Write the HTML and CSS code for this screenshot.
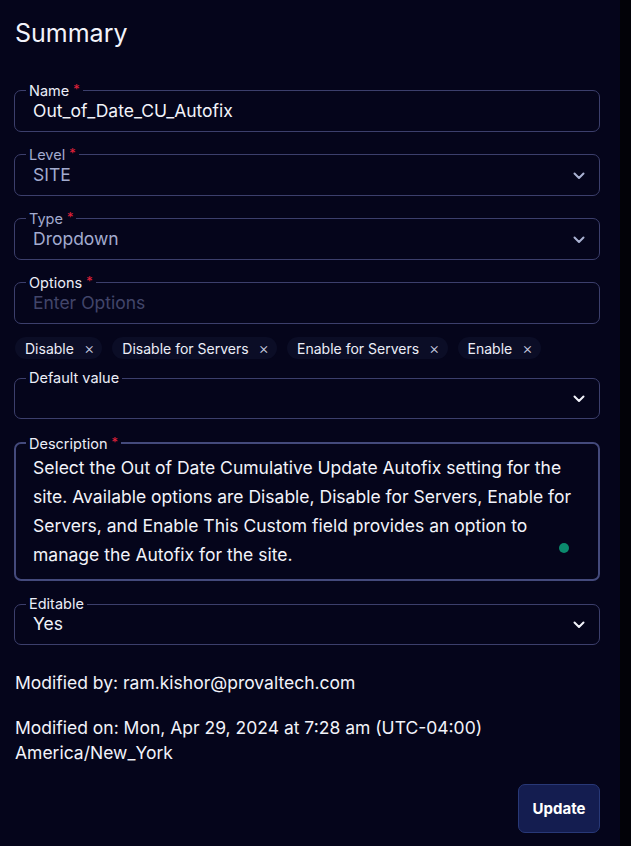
FILE: index.html
```html
<!DOCTYPE html>
<html lang="en">
<head>
<meta charset="utf-8">
<title>Summary</title>
<link rel="stylesheet" href="styles.css">
</head>
<body>
<div class="panel">
  <h1 class="title">Summary</h1>

  <fieldset class="field">
    <legend class="label">Name<span class="req">*</span></legend>
    <div class="row"><span class="value">Out_of_Date_CU_Autofix</span></div>
  </fieldset>

  <fieldset class="field muted">
    <legend class="label">Level<span class="req">*</span></legend>
    <div class="row"><span class="value">SITE</span>
      <svg class="chev" width="12" height="8" viewBox="0 0 12 8"><path d="M1.5 1.5 L6 6 L10.5 1.5" fill="none" stroke="currentColor" stroke-width="2" stroke-linecap="round" stroke-linejoin="round"/></svg>
    </div>
  </fieldset>

  <fieldset class="field muted">
    <legend class="label">Type<span class="req">*</span></legend>
    <div class="row"><span class="value">Dropdown</span>
      <svg class="chev" width="12" height="8" viewBox="0 0 12 8"><path d="M1.5 1.5 L6 6 L10.5 1.5" fill="none" stroke="currentColor" stroke-width="2" stroke-linecap="round" stroke-linejoin="round"/></svg>
    </div>
  </fieldset>

  <fieldset class="field">
    <legend class="label">Options<span class="req">*</span></legend>
    <div class="row"><span class="value placeholder">Enter Options</span></div>
  </fieldset>

  <div class="chips">
    <span class="chip">Disable<span class="x">×</span></span>
    <span class="chip">Disable for Servers<span class="x">×</span></span>
    <span class="chip">Enable for Servers<span class="x">×</span></span>
    <span class="chip">Enable<span class="x">×</span></span>
  </div>

  <fieldset class="field default">
    <legend class="label">Default value</legend>
    <div class="row"><span class="value"></span>
      <svg class="chev" width="12" height="8" viewBox="0 0 12 8"><path d="M1.5 1.5 L6 6 L10.5 1.5" fill="none" stroke="currentColor" stroke-width="2" stroke-linecap="round" stroke-linejoin="round"/></svg>
    </div>
  </fieldset>

  <fieldset class="field desc">
    <legend class="label">Description<span class="req">*</span></legend>
    <div class="desc-text">Select the Out of Date Cumulative Update Autofix setting for the site. Available options are Disable, Disable for Servers, Enable for Servers, and Enable This Custom field provides an option to manage the Autofix for the site.</div>
    <span class="dot"></span>
  </fieldset>

  <fieldset class="field editable">
    <legend class="label">Editable</legend>
    <div class="row"><span class="value">Yes</span>
      <svg class="chev" width="12" height="8" viewBox="0 0 12 8"><path d="M1.5 1.5 L6 6 L10.5 1.5" fill="none" stroke="currentColor" stroke-width="2" stroke-linecap="round" stroke-linejoin="round"/></svg>
    </div>
  </fieldset>

  <p class="meta">Modified by: ram.kishor@provaltech.com</p>
  <p class="meta meta-on">Modified on: Mon, Apr 29, 2024 at 7:28 am (UTC-04:00) America/New_York</p>

  <div class="actions">
    <button class="btn">Update</button>
  </div>
</div>
</body>
</html>
```

FILE: styles.css
```css
* { box-sizing: border-box; }
html, body {
  margin: 0;
  padding: 0;
  background: #020208;
  height: 100%;
}
body {
  font-family: Inter, "Noto Sans", "Liberation Sans", sans-serif;
  color: #eceef8;
}
.panel {
  width: 620px;
  min-height: 846px;
  background: #05051b;
  padding: 17px 20px 0 14px;
  display: flex;
  flex-direction: column;
}
.title {
  margin: 0 0 32px 1px;
  font-size: 25px;
  line-height: 32px;
  font-weight: 400;
  color: #f2f3fa;
}
.field {
  margin: 0 0 13px 0;
  padding: 0 14px 8px 11px;
  border: 1px solid #3c3f6c;
  border-radius: 7px;
  min-width: 0;
  position: relative;
}
.label {
  padding: 0 3px;
  font-size: 14.5px;
  line-height: 16px;
  color: #eceef8;
}
.req {
  color: #e3213a;
  margin-left: 4px;
  font-size: 13px;
  vertical-align: 2px;
}
.row {
  display: flex;
  align-items: center;
  justify-content: space-between;
  height: 24px;
  padding: 0 0 0 7px;
}
.value {
  font-size: 17.5px;
  line-height: 24px;
  color: #f2f3fa;
}
.muted .label, .muted .value { color: #a3abcf; }
.muted .chev { color: #aab2d2; }
.chev { color: #f2f3fa; margin-top: 2px; }
.placeholder { color: #42456a; }
.chips {
  display: flex;
  gap: 10px;
  margin: 0 0 11px 1px;
}
.chip {
  display: inline-flex;
  align-items: center;
  height: 22px;
  padding: 0 8px 0 10px;
  border-radius: 11px;
  background: #0b0d26;
  font-size: 14px;
  color: #eceef8;
}
.x {
  margin-left: 10px;
  font-size: 16px;
  font-weight: 300;
  line-height: 16px;
  color: #c9cde0;
}
.default { margin-bottom: 15px; }
.desc {
  border: 2px solid #444a7c;
  padding: 0 13px 10px 10px;
  margin-bottom: 15px;
}
.desc-text {
  padding: 1px 0 0 7px;
  font-size: 17.5px;
  line-height: 29px;
  color: #f2f3fa;
}
.dot {
  position: absolute;
  right: 29px;
  bottom: 26px;
  width: 10px;
  height: 10px;
  border-radius: 50%;
  background: #0b8a6d;
}
.editable { margin-bottom: 25px; }
.meta {
  margin: 0 0 20px 1px;
  font-size: 17.5px;
  line-height: 25px;
  color: #f2f3fa;
}
.meta-on { margin-bottom: 19px; }
.actions {
  display: flex;
  justify-content: flex-end;
}
.btn {
  width: 82px;
  height: 49px;
  margin-right: 0;
  background: #141d50;
  border: 1px solid #283877;
  border-radius: 7px;
  color: #ffffff;
  font-family: Inter, "Noto Sans", "Liberation Sans", sans-serif;
  font-size: 15px;
  font-weight: 700;
}
```
